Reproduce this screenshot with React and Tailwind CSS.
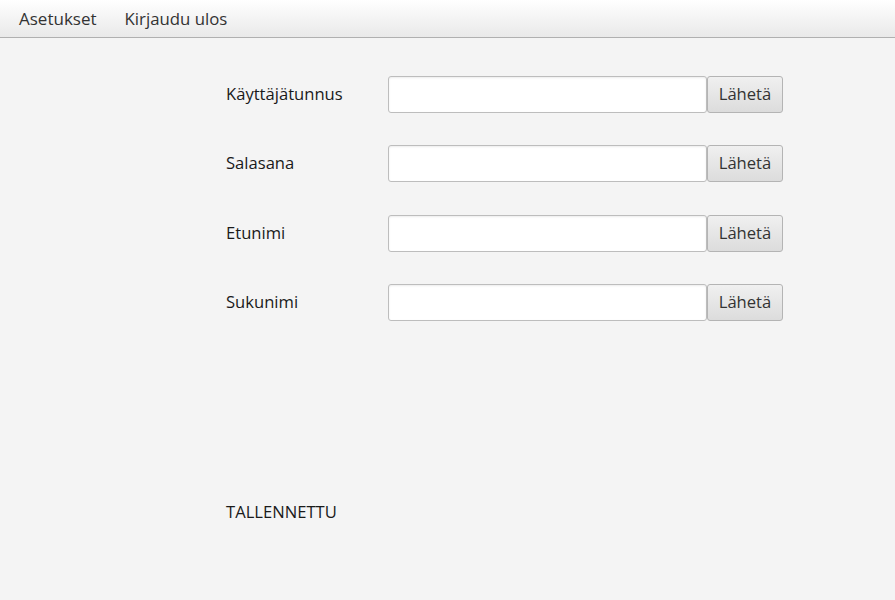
import React from "react";

const fields = ["Käyttäjätunnus", "Salasana", "Etunimi", "Sukunimi"];

function Row({ label }) {
  return (
    <div className="flex items-center h-[37px]">
      <div className="w-[162px] text-[16.6px] text-[#1a1a1a]">{label}</div>
      <input
        type="text"
        className="w-[319px] h-[37px] bg-white border border-[#bdbdbd] rounded-[3px] shadow-[inset_0_1px_2px_rgba(0,0,0,0.08)] outline-none px-2"
      />
      <button
        type="button"
        className="w-[76px] h-[37px] border border-[#b4b4b4] rounded-[3px] bg-gradient-to-b from-[#f0f0f0] to-[#dcdcdc] text-[16.6px] text-[#333]"
      >
        Lähetä
      </button>
    </div>
  );
}

export default function App() {
  return (
    <div
      className="w-[895px] h-[600px] bg-[#f4f4f4] flex flex-col"
      style={{ fontFamily: '"Open Sans", "Noto Sans", sans-serif' }}
    >
      <div className="h-[38px] flex items-center gap-[28px] px-[19px] bg-gradient-to-b from-white to-[#e9e9e9] border-b border-[#b0b0b0]">
        <span className="text-[17px] text-[#333]">Asetukset</span>
        <span className="text-[16.8px] text-[#333]">Kirjaudu ulos</span>
      </div>
      <div className="flex flex-col pl-[226px] pt-[38px] gap-[32.3px]">
        {fields.map((f) => (
          <Row key={f} label={f} />
        ))}
      </div>
      <div className="pl-[226px] mt-[179px] text-[16.6px] text-[#1a1a1a]">TALLENNETTU</div>
    </div>
  );
}
